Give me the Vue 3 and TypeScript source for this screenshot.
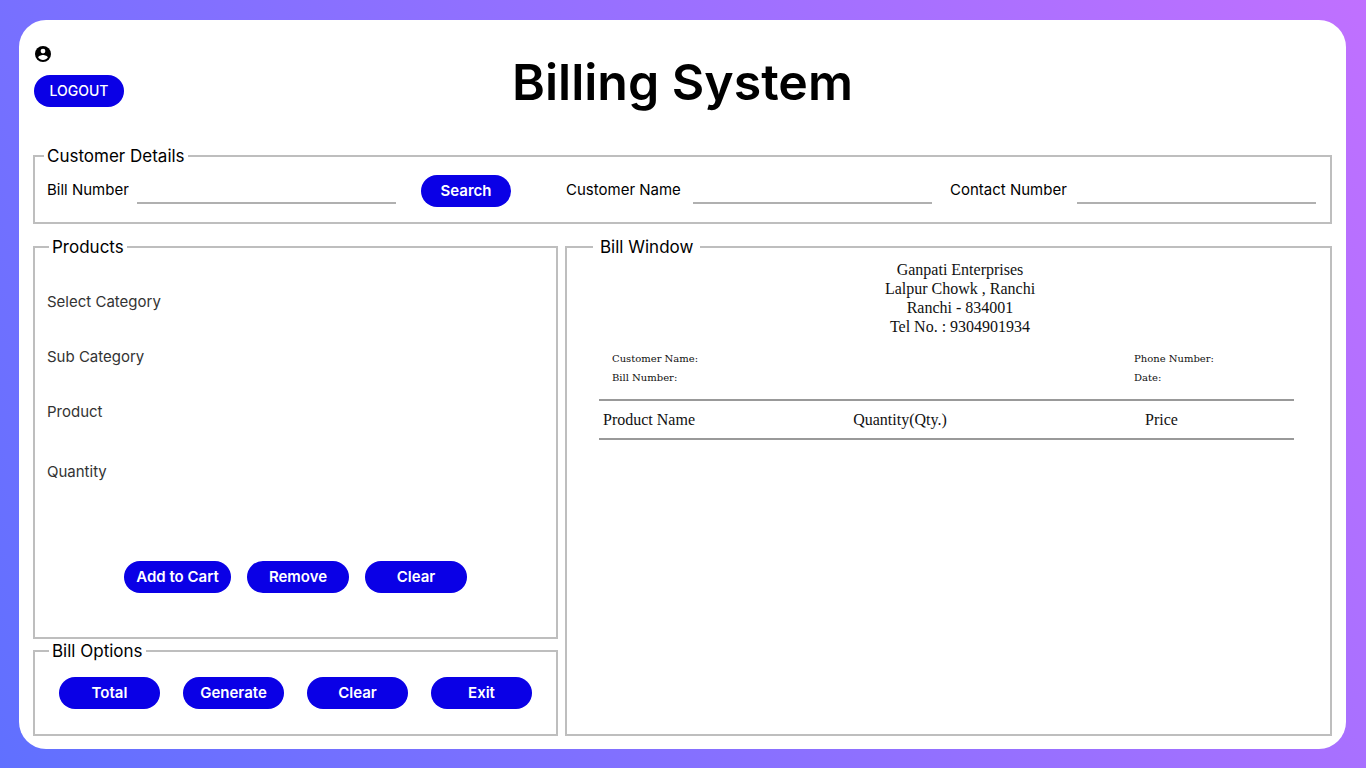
<script setup lang="ts">
import { ref } from 'vue'

interface ProductField {
  id: string
  label: string
}

const productSelects: ProductField[] = [
  { id: 'category', label: 'Select Category' },
  { id: 'sub-category', label: 'Sub Category' },
  { id: 'product', label: 'Product' },
]
const cartActions: string[] = ['Add to Cart', 'Remove', 'Clear']
const billActions: string[] = ['Total', 'Generate', 'Clear', 'Exit']
const address: string[] = [
  'Ganpati Enterprises',
  'Lalpur Chowk , Ranchi',
  'Ranchi - 834001',
  'Tel No. : 9304901934',
]

const billNumber = ref('')
const customerName = ref('')
const contactNumber = ref('')
const quantity = ref('')
</script>

<template>
  <div class="page">
    <main class="card">
      <header class="top">
        <div class="account">
          <svg class="avatar" viewBox="2 2 20 20" aria-hidden="true">
            <circle cx="12" cy="12" r="10" />
            <circle cx="12" cy="8.4" r="3" fill="#fff" />
            <path d="M12 13.3c-2.3 0-6 1.2-6 3.1 1.3 1.9 3.5 3.2 6 3.2s4.7-1.3 6-3.2c0-1.9-3.7-3.1-6-3.1z" fill="#fff" />
          </svg>
          <button type="button" class="btn logout">LOGOUT</button>
        </div>
        <h1>Billing System</h1>
      </header>

      <fieldset class="customer">
        <legend>Customer Details</legend>
        <div class="customer-row">
          <div class="field lookup">
            <label for="bill-number" class="short">Bill Number</label>
            <input id="bill-number" v-model="billNumber" type="text" />
            <button type="button" class="btn search">Search</button>
          </div>
          <div class="field">
            <label for="customer-name">Customer Name</label>
            <input id="customer-name" v-model="customerName" type="text" />
          </div>
          <div class="field">
            <label for="contact-number">Contact Number</label>
            <input id="contact-number" v-model="contactNumber" type="text" />
          </div>
        </div>
      </fieldset>

      <div class="columns">
        <div class="left">
          <fieldset class="products">
            <legend>Products</legend>
            <div class="product-rows">
              <div v-for="f in productSelects" :key="f.id" class="product-row">
                <label :for="f.id">{{ f.label }}</label>
                <select :id="f.id"></select>
              </div>
              <div class="product-row last">
                <label for="quantity">Quantity</label>
                <input id="quantity" v-model="quantity" type="text" />
              </div>
            </div>
            <div class="cart-actions">
              <button v-for="a in cartActions" :key="a" type="button" class="btn">{{ a }}</button>
            </div>
          </fieldset>

          <fieldset class="options">
            <legend>Bill Options</legend>
            <div class="option-actions">
              <button v-for="a in billActions" :key="a" type="button" class="btn">{{ a }}</button>
            </div>
          </fieldset>
        </div>

        <fieldset class="bill">
          <legend>Bill Window</legend>
          <div class="sheet">
            <address>
              <div v-for="line in address" :key="line">{{ line }}</div>
            </address>
            <div class="meta">
              <div>
                <p>Customer Name:</p>
                <p>Bill Number:</p>
              </div>
              <div>
                <p>Phone Number:</p>
                <p>Date:</p>
              </div>
            </div>
            <table>
              <thead>
                <tr>
                  <th class="name">Product Name</th>
                  <th class="qty">Quantity(Qty.)</th>
                  <th>Price</th>
                </tr>
              </thead>
            </table>
          </div>
        </fieldset>
      </div>
    </main>
  </div>
</template>

<style>
body {
  margin: 0;
}
</style>

<style scoped>
* {
  box-sizing: border-box;
}
.page {
  display: flex;
  min-height: 100vh;
  padding: 20px 20px 19px 19px;
  background: linear-gradient(60deg, #6070ff, #c070ff);
  font-family: Inter, 'Liberation Sans', sans-serif;
  color: #000;
}
.card {
  flex: 1;
  min-width: 0;
  display: flex;
  flex-direction: column;
  padding: 0 14px 13px;
  border-radius: 27px;
  background: #fff;
}
.top {
  display: grid;
  grid-template-columns: 1fr auto 1fr;
  min-height: 124px;
}
.account {
  display: flex;
  flex-direction: column;
  align-items: flex-start;
  gap: 13px;
  padding: 26px 0 0 1px;
}
.avatar {
  width: 16px;
  height: 16px;
  margin-left: 1px;
}
h1 {
  margin: 0;
  padding-top: 32px;
  font-size: 50px;
  line-height: 60px;
  font-weight: 600;
}
.btn {
  height: 32px;
  padding: 0 0 2px;
  border: 0;
  border-radius: 16px;
  background: #0a00e6;
  color: #fff;
  font-family: inherit;
  font-size: 15px;
  font-weight: 600;
  cursor: pointer;
}
.logout {
  width: 90px;
  font-size: 14px;
  font-weight: 500;
}
fieldset {
  min-width: 0;
  margin: 0;
  padding: 0;
  border: 2px solid #bebebe;
}
legend {
  margin-left: 9px;
  padding: 0 3px;
  font-size: 17px;
  line-height: 24px;
}
.customer-row {
  display: flex;
  gap: 18px;
  padding: 7px 14px 15px 12px;
}
.field {
  flex: 366;
  display: flex;
  min-width: 0;
}
.lookup {
  flex: 464;
  margin-right: 37px;
}
.field label {
  flex: 0 0 127px;
  font-size: 15px;
  line-height: 30px;
}
.field .short {
  flex-basis: 90px;
}
.field input {
  flex: 1;
  min-width: 0;
  height: 29px;
  padding: 0;
  border: 0;
  border-bottom: 2px solid #b0b0b0;
  background: transparent;
  font: inherit;
  outline: none;
}
.search {
  width: 90px;
  margin-left: 25px;
}
.columns {
  flex: 1;
  display: grid;
  grid-template-columns: 525fr 767fr;
  gap: 7px;
  margin-top: 11px;
}
.left {
  display: flex;
  flex-direction: column;
  min-width: 0;
}
.products {
  flex: 1;
}
.products legend,
.options legend {
  margin-left: 14px;
}
.product-rows {
  padding: 15px 12px 0;
}
.product-row {
  display: flex;
  align-items: center;
  height: 55px;
  color: #333;
  font-size: 15px;
}
.product-row.last {
  margin-top: 5px;
}
.product-row label {
  flex: 0 0 130px;
}
.product-row select,
.product-row input {
  flex: 1;
  min-width: 0;
  height: 32px;
  border: 0;
  background: transparent;
  appearance: none;
  font: inherit;
  outline: none;
}
.cart-actions {
  display: flex;
  justify-content: center;
  gap: 16px;
  padding: 62px 0 44px;
}
.cart-actions .btn {
  width: 102px;
}
.cart-actions .btn:first-child {
  width: 107px;
}
.option-actions {
  display: grid;
  grid-template-columns: repeat(4, 1fr);
  gap: 23px;
  padding: 14px 24px 25px;
}
.bill legend {
  margin-left: 26px;
  padding: 0 7px;
}
.sheet {
  padding: 1px 36px 0 32px;
  font-family: 'Liberation Serif', serif;
  color: #111;
}
address {
  padding-left: 27px;
  font-size: 16px;
  font-style: normal;
  line-height: 19px;
  text-align: center;
}
.meta {
  display: grid;
  grid-template-columns: 522fr 160fr;
  padding: 13px 0 0 13px;
  font-family: 'DejaVu Serif', serif;
  font-size: 10px;
  line-height: 19px;
}
.meta p {
  margin: 0;
}
table {
  width: 100%;
  margin-top: 12px;
  border-collapse: separate;
  border-spacing: 0;
  table-layout: fixed;
}
th {
  height: 41px;
  padding: 0 0 0 4px;
  border-top: 2px solid #999;
  border-bottom: 2px solid #999;
  font-size: 16px;
  font-weight: 400;
  text-align: left;
}
.name {
  width: 36%;
}
.qty {
  width: 42%;
}
</style>
